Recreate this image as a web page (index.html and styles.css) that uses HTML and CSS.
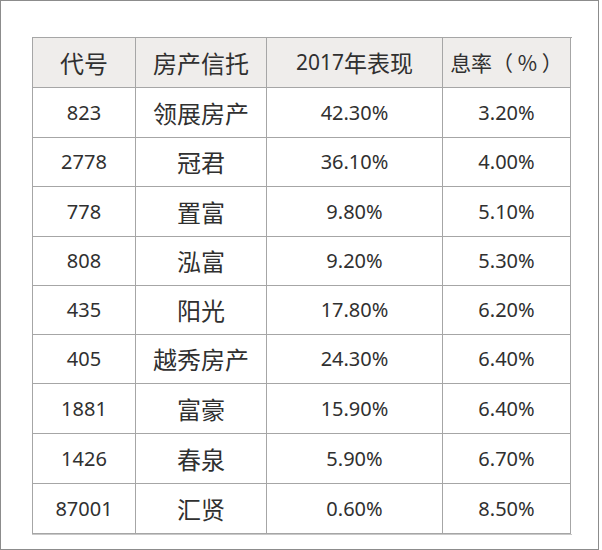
FILE: index.html
```html
<!DOCTYPE html>
<html lang="zh">
<head>
<meta charset="utf-8">
<link rel="stylesheet" href="styles.css">
</head>
<body>
<div class="frame">
  <div class="grid">
    <div class="cell head"><span class="cn">代号</span></div>
    <div class="cell head"><span class="cn">房产信托</span></div>
    <div class="cell head num-head">2017<span class="cn cn-mid">年表现</span></div>
    <div class="cell head"><span class="cn cn-small">息率（ % ）</span></div>

    <div class="cell">823</div><div class="cell"><span class="cn">领展房产</span></div><div class="cell">42.30%</div><div class="cell">3.20%</div>
    <div class="cell">2778</div><div class="cell"><span class="cn">冠君</span></div><div class="cell">36.10%</div><div class="cell">4.00%</div>
    <div class="cell">778</div><div class="cell"><span class="cn">置富</span></div><div class="cell">9.80%</div><div class="cell">5.10%</div>
    <div class="cell">808</div><div class="cell"><span class="cn">泓富</span></div><div class="cell">9.20%</div><div class="cell">5.30%</div>
    <div class="cell">435</div><div class="cell"><span class="cn">阳光</span></div><div class="cell">17.80%</div><div class="cell">6.20%</div>
    <div class="cell">405</div><div class="cell"><span class="cn">越秀房产</span></div><div class="cell">24.30%</div><div class="cell">6.40%</div>
    <div class="cell">1881</div><div class="cell"><span class="cn">富豪</span></div><div class="cell">15.90%</div><div class="cell">6.40%</div>
    <div class="cell">1426</div><div class="cell"><span class="cn">春泉</span></div><div class="cell">5.90%</div><div class="cell">6.70%</div>
    <div class="cell">87001</div><div class="cell"><span class="cn">汇贤</span></div><div class="cell">0.60%</div><div class="cell">8.50%</div>
  </div>
</div>
</body>
</html>
```

FILE: styles.css
```css
html, body {
  margin: 0;
  padding: 0;
  background: #ffffff;
}

.frame {
  box-sizing: border-box;
  width: 599px;
  height: 550px;
  border: 1px solid #8c8c8c;
  padding: 36px 0 0 31px;
  background: #ffffff;
}

.grid {
  display: grid;
  width: 539px;
  grid-template-columns: 103px 131px 176px 128px;
  grid-template-rows: 50px 50px 49px 50px 49px 49px 49px 50px 50px 50px;
  border-top: 1px solid #a6a6a6;
  border-left: 1px solid #a6a6a6;
  box-shadow: 0 1px 0 #c8c8c8;
}

.cell {
  box-sizing: border-box;
  display: flex;
  align-items: center;
  justify-content: center;
  border-right: 1px solid #a6a6a6;
  border-bottom: 1px solid #a6a6a6;
  font-family: "Noto Sans", "Noto Sans CJK SC", sans-serif;
  font-size: 20px;
  color: #303030;
  line-height: 1;
  white-space: nowrap;
}

.head {
  background: #efedeb;
}

.num-head {
  font-size: 21px;
}

.cn {
  font-family: "Noto Sans CJK SC", sans-serif;
  font-size: 24px;
}

.cn-mid {
  font-size: 23px;
}

.cn-small {
  font-size: 21px;
}
```
